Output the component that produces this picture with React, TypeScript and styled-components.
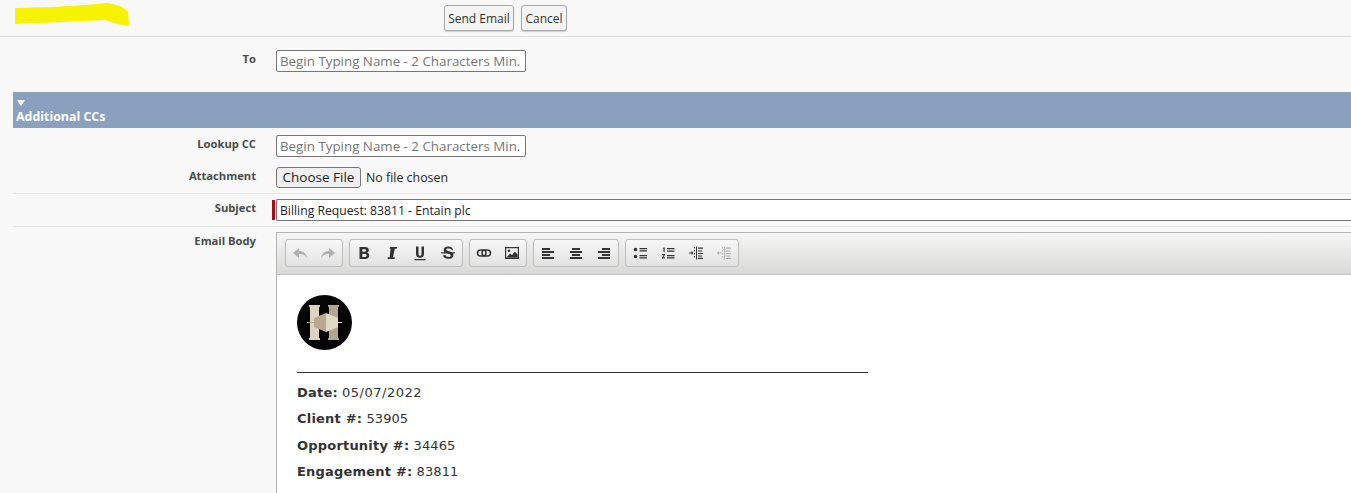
import React from "react";
import styled, { createGlobalStyle } from "styled-components";

const Global = createGlobalStyle`
  html, body { margin: 0; padding: 0; background: #f8f8f8; overflow: hidden; }
  body { font-family: "Open Sans", "Liberation Sans", sans-serif; color: #333; }
`;
const Page = styled.div`width: 1351px; height: 493px; overflow: hidden; background: #f8f8f8;`;
const Header = styled.header`
  height: 36px; border-bottom: 1px solid #dcdcdc; display: flex; align-items: flex-start; position: relative;
`;
const Scribble = styled.svg`position: absolute; left: 13px; top: 2px;`;
const Actions = styled.div`display: flex; gap: 7px; margin: 5px 0 0 444px;`;
const Btn = styled.button<{ $w: number }>`
  height: 26px; padding: 0; width: ${p => p.$w}px; border: 1px solid #a9a9a9; border-radius: 3px;
  background: #f4f4f4; color: #333; font: 12px "Open Sans", sans-serif; box-shadow: 0 1px 1px #ccc;
`;
const Row = styled.div<{ $h: number; $line?: boolean; $top?: number }>`
  display: flex; height: ${p => p.$h}px; padding-top: ${p => p.$top ?? 0}px; box-sizing: border-box;
  margin-left: 13px; border-bottom: ${p => (p.$line ? "1px solid #e6e6e6" : "0")};
`;
const Label = styled.label<{ $off?: number }>`
  width: 243px; text-align: right; font-weight: 700; font-size: 11.2px; line-height: 16px; color: #4a4a4a;
  padding-top: ${p => p.$off ?? 0}px; flex: none;
`;
const Field = styled.div`margin-left: 20px; flex: 1; display: flex; min-width: 0;`;
const NameInput = styled.input`
  width: 250px; height: 22px; box-sizing: border-box; border: 1px solid #767676; border-radius: 2px; padding: 0 3px;
  background: #fff; font: 13.35px "Open Sans", sans-serif;
  &::placeholder { color: #757575; opacity: 1; }
`;
const Section = styled.div`
  margin-left: 13px; height: 36px; background: #8aa0bf; color: #fff; box-sizing: border-box; padding: 8px 0 0 3px;
  font-weight: 700; font-size: 12.4px; line-height: 16px;
`;
const Triangle = styled.div`
  width: 0; height: 0; margin-left: 1px; border-left: 4px solid transparent; border-right: 4px solid transparent; border-top: 6px solid #fff;
`;
const SectionTitle = styled.div`margin-top: 3px;`;
const FileInput = styled.input`
  font: 12.4px "Open Sans", sans-serif; color: #222; height: 21px; padding: 0; width: 300px;
  &::file-selector-button {
    height: 21px; width: 85px; margin-right: 5px; padding: 0 0 2px; border: 1px solid #767676; border-radius: 3px;
    background: #efefef; color: #222; font: 13.5px "Open Sans", sans-serif;
  }
`;
const Required = styled.span`width: 3px; height: 20px; margin: 1px 1px 0 -4px; background: #a80d14; flex: none;`;
const SubjectInput = styled.input`
  flex: 1; height: 22px; box-sizing: border-box; border: 1px solid #767676; border-right: 0; padding: 0 3px;
  border-radius: 2px 0 0 2px; background: #fff; color: #222; font: 12.2px "Open Sans", sans-serif;
`;
const Editor = styled.div`
  flex: 1; height: 300px; border: 1px solid #b4b4b4; border-right: 0; box-sizing: border-box; background: #fff;
`;
const Toolbar = styled.div`
  height: 42px; box-sizing: border-box; border-bottom: 1px solid #c2c2c2; padding: 6px 0 0 8px; display: flex; gap: 6px;
  background: linear-gradient(#f6f6f6, #d8d9d7);
`;
const Group = styled.div`
  height: 28px; box-sizing: border-box; border: 1px solid #bdbdbd; border-radius: 3px; display: flex;
  background: linear-gradient(#f7f7f7, #e2e2e2);
`;
const Tool = styled.span<{ $off?: boolean }>`
  width: 28px; height: 26px; display: flex; align-items: center; justify-content: center; opacity: ${p => (p.$off ? 0.32 : 1)};
  svg { display: block; }
`;
const Body = styled.div`
  padding: 20px 0 0 20px; font-family: "DejaVu Sans", Verdana, sans-serif; font-size: 13px; color: #333; letter-spacing: 0.1px;
`;
const Logo = styled.svg`display: block;`;
const Rule = styled.div`
  width: 571px; height: 1px; background: #333; margin: 22px 0 0;
`;
const Line = styled.p<{ $top: number }>`
  margin: ${p => p.$top}px 0 0; line-height: 16px; strong { font-weight: 700; letter-spacing: 0.2px; }
`;
const DateValue = styled.span`letter-spacing: 0.5px;`;

const I = ({ children }: { children: React.ReactNode }) => (
  <svg width="16" height="16" viewBox="0 0 16 16" fill="#333">{children}</svg>
);

const icons: React.ReactNode[][] = [
  [
    <path key="u" d="M1 8l6-5v3c4 0 7 2 8 7-2-3-4-4-8-4v4z" />,
    <path key="r" d="M15 8l-6-5v3C5 6 2 8 1 13c2-3 4-4 8-4v4z" />,
  ],
  [
    <path key="b" fillRule="evenodd" d="M3.500 2h5.500c2.500 0 3.800 1.200 3.800 3 0 1.300-.7 2.200-1.800 2.600 1.400.4 2.200 1.500 2.200 3 0 2.200-1.600 3.400-4.200 3.400H3.500zm2.800 2.200v2.600h2.300c1 0 1.500-.5 1.500-1.300s-.5-1.300-1.500-1.300zm0 4.700v3h2.600c1.100 0 1.700-.6 1.700-1.500s-.6-1.500-1.700-1.500z" />,
    <path key="i" d="M6 2h7l-.3 1.800h-1.900L9 12.200h1.800l-.3 1.800h-7l.3-1.800h1.900L6.500 3.800H5.700z" />,
    <path key="un" d="M4 1.500h2.500v7c0 1.600.5 2.300 1.500 2.300s1.500-.7 1.500-2.300v-7H12v7.100c0 2.900-1.400 4.200-4 4.200s-4-1.300-4-4.200zM2.500 14h11v1.200h-11z" />,
    <path key="s" d="M12 5.500c-.3-1.400-1.600-2-3.800-2-1.300 0-2 .4-2 1.100 0 .9.900 1.100 2.900 1.600 2.700.6 4.300 1.400 4.300 3.700 0 2.500-2 3.900-5.200 3.900-3 0-5-1.300-5.200-3.500l2.500-.4c.2 1.300 1.300 2 2.900 2 1.400 0 2.300-.5 2.300-1.500 0-.9-.8-1.200-2.900-1.700C5.300 8.100 3.700 7.300 3.700 5c0-2.200 1.800-3.500 4.500-3.500 2.600 0 4.500 1.200 4.900 3.400zM1 7.300h14v1.200H1z" />,
  ],
  [
    <g key="l" fill="none" stroke="#333" strokeWidth="1.500">
      <rect x="1.500" y="5" width="8.500" height="6" rx="3" />
      <rect x="6" y="5" width="8.500" height="6" rx="3" />
    </g>,
    <path key="img" fillRule="evenodd" d="M1 2h14v12H1zm1.200 1.200v9.600h11.600V3.200zM5 4.500a1.300 1.300 0 110 2.600 1.300 1.300 0 010-2.600zM2.500 12.500l3.500-4 2 1.500 3-3.500 2.500 3v3z" />,
  ],
  [
    <path key="al" d="M2 3h8v2H2zM2 6h12v2H2zM2 9h8v2H2zM2 12h12v2H2z" />,
    <path key="ac" d="M4 3h8v2H4zM2 6h12v2H2zM4 9h8v2H4zM2 12h12v2H2z" />,
    <path key="ar" d="M6 3h8v2H6zM2 6h12v2H2zM6 9h8v2H6zM2 12h12v2H2z" />,
  ],
  [
    <path key="ul" d="M3.500 2.700a1.800 1.800 0 110 3.600 1.800 1.800 0 010-3.600zM3.500 9.700a1.800 1.800 0 110 3.600 1.800 1.800 0 010-3.600zM7.500 3h7.500v1.200H7.500zM7.500 5.300h7.500v1.200H7.500zM7.500 10h7.500v1.200H7.500zM7.500 12.300h7.500v1.200H7.500z" />,
    <path key="ol" d="M3.500 2.500h1.200v4.500H3.500V3.600l-1 .3zM2 9h3v1L3.400 12.200H5v1.300H2v-1l1.700-2.200H2zM7 3h7.500v1.200H7zM7 5.500h7.500v1.200H7zM7 10h7.500v1.200H7zM7 12.300h7.500v1.200H7z" />,
    <path key="od" d="M1 7.500h2.500V6l2 2-2 2V8.500H1zM6 2h1v1.500H6zM6 5h1v1.500H6zM6 8h1v1.500H6zM6 11h1v1.500H6zM8 1.500h1v13H8zM10 2.500h5v1.300h-5zM10 5.500h4v1h-4zM10 8h5v1h-5zM10 10.500h4v1h-4zM10 12.800h5v1.200h-5z" />,
    <path key="in" d="M5.500 7.500H3V6L1 8l2 2V8.500h2.500zM6 2h1v1.500H6zM6 5h1v1.500H6zM6 8h1v1.500H6zM6 11h1v1.500H6zM8 1.500h1v13H8zM10 2.500h5v1.300h-5zM10 5.500h4v1h-4zM10 8h5v1h-5zM10 10.500h4v1h-4zM10 12.800h5v1.200h-5z" />,
  ],
];
const disabled = new Set(["0-0", "0-1", "4-3"]);

export default function App() {
  return (
    <Page>
      <Global />
      <Header>
        <Scribble width="118" height="26" viewBox="0 0 118 26">
          <path d="M2 6 L40 5 L72 3 L95 1 L107 4 L115 9 L116 24 L104 22 L92 18 L50 20 L2 22 Z" fill="#f7f300" />
        </Scribble>
        <Actions>
          <Btn $w={70}>Send Email</Btn>
          <Btn $w={46}>Cancel</Btn>
        </Actions>
      </Header>
      <Row $h={55} $top={13}>
        <Label htmlFor="to" $off={1}>To</Label>
        <Field><NameInput id="to" placeholder="Begin Typing Name - 2 Characters Min." /></Field>
      </Row>
      <Section>
        <Triangle />
        <SectionTitle>Additional CCs</SectionTitle>
      </Section>
      <Row $h={39} $top={7}>
        <Label htmlFor="cc" $off={1}>Lookup CC</Label>
        <Field><NameInput id="cc" placeholder="Begin Typing Name - 2 Characters Min." /></Field>
      </Row>
      <Row $h={27} $line>
        <Label htmlFor="file" $off={1}>Attachment</Label>
        <Field><FileInput id="file" type="file" /></Field>
      </Row>
      <Row $h={33} $line $top={5}>
        <Label htmlFor="subj" $off={1}>Subject</Label>
        <Field><Required /><SubjectInput id="subj" defaultValue="Billing Request: 83811 - Entain plc" /></Field>
      </Row>
      <Row $h={267} $top={5}>
        <Label $off={1}>Email Body</Label>
        <Field>
          <Editor>
            <Toolbar>
              {icons.map((g, i) => (
                <Group key={i}>
                  {g.map((ic, j) => (
                    <Tool key={j} $off={disabled.has(`${i}-${j}`)}><I>{ic}</I></Tool>
                  ))}
                </Group>
              ))}
            </Toolbar>
            <Body>
              <Logo width="55" height="55" viewBox="0 0 55 55">
                <circle cx="27.500" cy="27.500" r="27.500" fill="#050505" />
                <path d="M12 10h11v1.500l-1 1V42.500l1 1V45H12v-1.500l1-1V12.500l-1-1z" fill="#ddd3c0" />
                <path d="M31 10h11v1.500l-1 1V42.500l1 1V45H31v-1.500l1-1V12.500l-1-1z" fill="#b3a88f" />
                <path d="M10 27h7v-4l12-5v19l-12-5v-4h-7z" fill="#bba98f" />
                <path d="M29 18l12 5v4h4v1h-4v4l-12 5z" fill="#e2d8c6" />
              </Logo>
              <Rule />
              <Line $top={12}><strong>Date:</strong> <DateValue>05/07/2022</DateValue></Line>
              <Line $top={10}><strong>Client #:</strong> 53905</Line>
              <Line $top={11}><strong>Opportunity #:</strong> 34465</Line>
              <Line $top={10}><strong>Engagement #:</strong> 83811</Line>
            </Body>
          </Editor>
        </Field>
      </Row>
    </Page>
  );
}
